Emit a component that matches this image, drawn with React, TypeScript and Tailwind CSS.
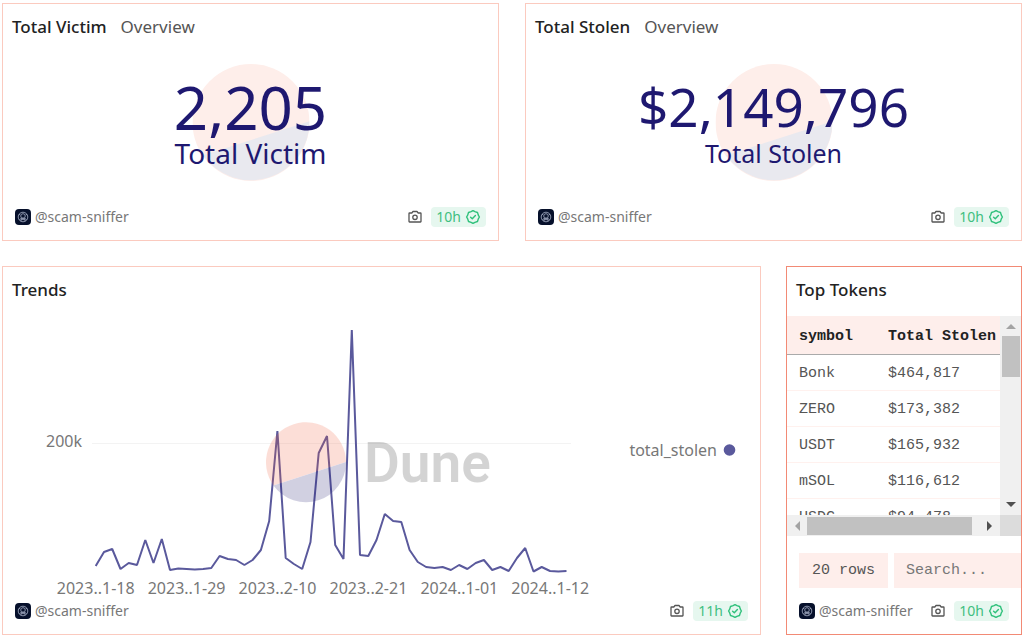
import type { ReactNode } from "react";

const trend = [
  7, 21, 24, 4, 10, 8, 33, 10, 34, 3, 4.5, 4, 3.5, 4, 5, 17, 14, 13, 8, 13, 23,
  52, 142, 15, 9, 4, 31, 120, 137, 28, 14, 243, 18, 17, 33, 59, 52, 51, 23, 11,
  6, 5, 6, 3, 8, 4, 10, 13, 3, 6, 2, 15, 25, 1.5, 6, 2, 1.5, 2,
];

const ticks = [
  "2023..1-18",
  "2023..1-29",
  "2023..2-10",
  "2023..2-21",
  "2024..1-01",
  "2024..1-12",
];

const tokens = [
  { symbol: "Bonk", total: "$464,817" },
  { symbol: "ZERO", total: "$173,382" },
  { symbol: "USDT", total: "$165,932" },
  { symbol: "mSOL", total: "$116,612" },
  { symbol: "USDC", total: "$94,478" },
];

export default function App() {
  return (
    <main className="flex flex-col gap-[25px] bg-white px-0.5 pt-[3px] pb-0.5 font-['Noto_Sans',sans-serif]">
      <div className="grid grid-cols-2 gap-[26px]">
        <Counter
          title="Total Victim"
          value="2,205"
          valueClass="text-[60px]"
          labelClass="text-[28px]"
        />
        <Counter
          title="Total Stolen"
          value="$2,149,796"
          valueClass="text-[53px]"
          labelClass="text-[25px]"
        />
      </div>
      <div className="grid grid-cols-[minmax(0,759fr)_minmax(0,236fr)] gap-[25px]">
        <Card title="Trends" age="11h" className="border-[#fbcabf]">
          <TrendChart />
        </Card>
        <Card title="Top Tokens" age="10h" className="border-[#f28a75]">
          <TokenTable />
        </Card>
      </div>
    </main>
  );
}

function Card(props: {
  title: string;
  subtitle?: string;
  age: string;
  className: string;
  children: ReactNode;
}) {
  return (
    <section className={`flex flex-col border bg-white ${props.className}`}>
      <h2 className="flex h-12 items-center gap-3.5 px-[9px] pb-0.5 text-[17px] font-medium text-[#222]">
        {props.title}
        {props.subtitle && (
          <span className="font-normal text-[#555]">{props.subtitle}</span>
        )}
      </h2>
      {props.children}
      <footer className="mt-auto mb-[13px] flex h-5 items-center px-3 text-sm">
        <a href="#scam-sniffer" className="flex items-center gap-1 text-[#777]">
          <Avatar />
          @scam-sniffer
        </a>
        <button type="button" aria-label="Screenshot" className="ml-auto">
          <CameraIcon />
        </button>
        <button
          type="button"
          className="ml-2 flex h-5 items-center gap-1 rounded bg-[#e6f7ef] px-[5px] text-[#3fbf80]"
        >
          {props.age}
          <VerifiedIcon />
        </button>
      </footer>
    </section>
  );
}

function Counter(props: {
  title: string;
  value: string;
  valueClass: string;
  labelClass: string;
}) {
  return (
    <Card
      title={props.title}
      subtitle="Overview"
      age="10h"
      className="border-[#fbcabf]"
    >
      <div className="relative flex h-[155px] flex-col items-center text-[#1e1870]">
        <svg
          viewBox="0 0 100 100"
          className="absolute top-3 left-1/2 size-[117px] -translate-x-1/2"
        >
          <circle cx="50" cy="50" r="50" fill="#feeeea" />
          <path d="M100 49A50 50 0 0 1 9 78Z" fill="#e9e9ef" />
        </svg>
        <div className="relative flex h-[117px] flex-col items-center justify-end">
          <div className={`leading-[60px] ${props.valueClass}`}>
            {props.value}
          </div>
          <div className={`leading-8 ${props.labelClass}`}>{props.title}</div>
        </div>
      </div>
    </Card>
  );
}

function TrendChart() {
  const points = trend
    .map((v, i) => `${(92.7 + i * 8.26).toFixed(1)},${(257 - v).toFixed(1)}`)
    .join(" ");

  return (
    <svg viewBox="0 -1 757 286" className="h-[286px] w-full">
      <path d="M89 127.5H568" stroke="#f3f3f3" />
      <text x="79" y="131" textAnchor="end" fontSize="16" fill="#777">
        200k
      </text>
      {ticks.map((tick, i) => (
        <text
          key={tick}
          x={92.7 + i * 90.9}
          y="278"
          textAnchor="middle"
          fontSize="16"
          fill="#777"
        >
          {tick}
        </text>
      ))}
      <polyline
        points={points}
        fill="none"
        stroke="#5a599c"
        strokeWidth="2"
        strokeLinejoin="bevel"
      />
      {/* watermark sits over the line */}
      <g opacity="0.2">
        <path d="M343 146A40 40 0 1 0 270.5 169.5Z" fill="#f4603e" />
        <path d="M343 146A40 40 0 0 1 270.5 169.5Z" fill="#1e1870" />
      </g>
      <text
        x="361"
        y="166"
        fontFamily="Roboto, sans-serif"
        fontSize="55"
        fontWeight="600"
        fill="#000"
        opacity="0.17"
      >
        Dune
      </text>
      <text x="714" y="140" textAnchor="end" fontSize="16" fill="#777">
        total_stolen
      </text>
      <circle cx="726.5" cy="134" r="5.8" fill="#5a599c" />
    </svg>
  );
}

function TokenTable() {
  return (
    <div className="flex flex-col pt-px font-['Liberation_Mono',monospace] text-[15px]">
      <div className="grid h-[220px] grid-cols-[minmax(0,1fr)_21px] grid-rows-[199px_21px]">
        <div className="overflow-hidden">
          <table className="w-full table-fixed border-collapse text-left whitespace-nowrap text-[#555]">
            <thead>
              <tr className="h-[38px] border-b border-[#aaa] bg-[#feeeeb] text-[#222]">
                <th className="w-[89px] pt-1 pl-3 font-bold">symbol</th>
                <th className="pt-1 pl-3 font-bold">Total Stolen</th>
              </tr>
            </thead>
            <tbody>
              {tokens.map((t) => (
                <tr key={t.symbol} className="h-9 border-b border-[#fff1ee]">
                  <td className="pt-1 pl-3">{t.symbol}</td>
                  <td className="pt-1 pl-3">{t.total}</td>
                </tr>
              ))}
            </tbody>
          </table>
        </div>
        <div className="flex flex-col items-center bg-[#f0f0f0]">
          <Arrow className="size-5" d="M5 13L10 8L15 13Z" fill="#a3a3a3" />
          <div className="h-[41px] w-[18px] bg-[#c1c1c1]" />
          <Arrow
            className="mt-auto size-5"
            d="M5 7L10 12L15 7Z"
            fill="#505050"
          />
        </div>
        <div className="flex items-center bg-[#f0f0f0]">
          <Arrow className="size-5" d="M13 5L8 10L13 15Z" fill="#a3a3a3" />
          <div className="h-[18px] w-[165px] bg-[#c1c1c1]" />
          <Arrow
            className="ml-auto size-5"
            d="M7 5L12 10L7 15Z"
            fill="#505050"
          />
        </div>
        <div className="bg-[#dcdcdc]" />
      </div>
      <div className="mt-[17px] flex h-[35px] gap-1.5 pl-3">
        <div className="flex w-[89px] shrink-0 items-center justify-center bg-[#feeeeb] pt-0.5 text-[#555]">
          20 rows
        </div>
        <input
          type="text"
          aria-label="Search"
          placeholder="Search..."
          className="min-w-0 flex-1 bg-[#feeeeb] px-3 pt-0.5 text-[#555] outline-none placeholder:text-[#777]"
        />
      </div>
    </div>
  );
}

function Arrow(props: { className: string; d: string; fill: string }) {
  return (
    <svg viewBox="0 0 20 20" className={props.className}>
      <path d={props.d} fill={props.fill} />
    </svg>
  );
}

function Avatar() {
  return (
    <svg viewBox="0 0 16 16" className="size-4" fill="none">
      <rect width="16" height="16" rx="4" fill="#06102b" />
      <g stroke="#a9b2c9" strokeWidth="0.8">
        <circle cx="8" cy="8" r="4.8" />
        <circle cx="8" cy="7" r="2.3" />
        <path d="M4.5 10.5C6 8.8 10 8.8 11.5 10.5M6 12.2V10.6H10V12.2M5 5L3.8 6.4M11 5L12.2 6.4" />
      </g>
    </svg>
  );
}

function CameraIcon() {
  return (
    <svg
      viewBox="0 0 16 16"
      className="size-4"
      fill="none"
      stroke="#555"
      strokeWidth="1.3"
      strokeLinejoin="round"
    >
      <path d="M2.5 4H4.8L6 2.5H10L11.2 4H13.5Q14 4 14 4.5V12.5Q14 13 13.5 13H2.5Q2 13 2 12.5V4.5Q2 4 2.5 4Z" />
      <circle cx="8" cy="8.3" r="2.2" />
    </svg>
  );
}

function VerifiedIcon() {
  return (
    <svg
      viewBox="0 0 16 16"
      className="size-4"
      fill="none"
      stroke="#2fc07b"
      strokeWidth="1.4"
      strokeLinecap="round"
      strokeLinejoin="round"
    >
      <path d="M8 1.6L9.9 2.7L12.5 3.5L13.3 6.1L14.4 8L13.3 9.9L12.5 12.5L9.9 13.3L8 14.4L6.1 13.3L3.5 12.5L2.7 9.9L1.6 8L2.7 6.1L3.5 3.5L6.1 2.7Z" />
      <path d="M5.6 8.2L7.3 9.8L10.4 6.5" />
    </svg>
  );
}
